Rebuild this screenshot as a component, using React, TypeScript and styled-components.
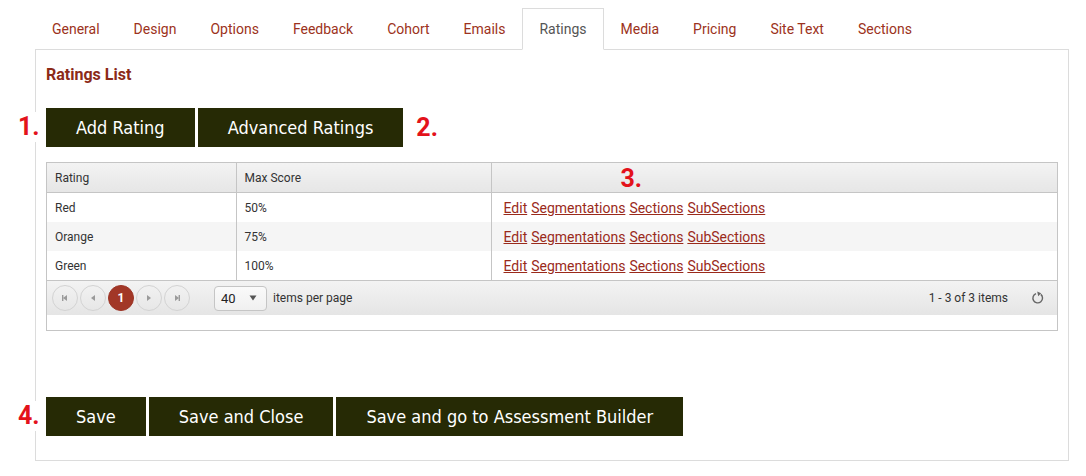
import React from "react";
import styled, { createGlobalStyle } from "styled-components";

const GlobalStyle = createGlobalStyle`
  body {
    margin: 0;
    background: #ffffff;
    font-family: Roboto, "Liberation Sans", sans-serif;
  }
`;

const tabs = ["General", "Design", "Options", "Feedback", "Cohort", "Emails", "Ratings", "Media", "Pricing", "Site Text", "Sections"];

const ratings = [
  { name: "Red", score: "50%" },
  { name: "Orange", score: "75%" },
  { name: "Green", score: "100%" },
];

const Page = styled.div`
  width: 1034px;
  padding: 8px 0 0 35px;
`;

const TabStrip = styled.div`
  display: flex;
  position: relative;
  z-index: 1;
  margin-bottom: -1px;
`;

const Tab = styled.div<{ $active?: boolean }>`
  height: 40px;
  line-height: 40px;
  padding: 0 16px;
  font-size: 14px;
  color: ${(p) => (p.$active ? "#555555" : "#9c3220")};
  border: 1px solid ${(p) => (p.$active ? "#dcdcdc" : "transparent")};
  border-bottom: 1px solid ${(p) => (p.$active ? "#ffffff" : "transparent")};
  background: ${(p) => (p.$active ? "#ffffff" : "transparent")};
  cursor: pointer;
`;

const Panel = styled.div`
  border: 1px solid #dcdcdc;
  padding: 15px 10px 24px 10px;
`;

const Heading = styled.h3`
  margin: 0;
  font-size: 16px;
  line-height: 20px;
  font-weight: 700;
  color: #8c2a18;
`;

const ButtonRow = styled.div<{ $top: number }>`
  display: flex;
  align-items: center;
  gap: 3px;
  position: relative;
  margin-top: ${(p) => p.$top}px;
`;

const ActionButton = styled.button`
  height: 39px;
  padding: 0 30px;
  border: none;
  background: #262a05;
  color: #ffffff;
  font-family: "DejaVu Sans Condensed", "DejaVu Sans", sans-serif;
  font-size: 18px;
  cursor: pointer;
`;

const Marker = styled.span`
  color: #e3121b;
  font-family: Roboto, "Liberation Sans", sans-serif;
  font-weight: 700;
  font-size: 25px;
  line-height: 30px;
`;

const SideMarker = styled(Marker)`
  position: absolute;
  left: -28px;
  top: 4px;
  background: #ffffff;
`;

const FlowMarker = styled(Marker)`
  margin-left: 10px;
`;

const GridBox = styled.div`
  margin-top: 15px;
  border: 1px solid #c5c5c5;
`;

const Table = styled.table`
  width: 100%;
  border-collapse: collapse;
  table-layout: fixed;
  font-size: 12px;
  color: #333333;
`;

const HeadCell = styled.th`
  height: 29px;
  padding: 0 8px;
  text-align: left;
  font-weight: 400;
  line-height: 16px;
  background: linear-gradient(#f3f3f3, #e6e6e6);
  border-bottom: 1px solid #c5c5c5;
  border-left: 1px solid #c5c5c5;
  &:first-child {
    border-left: none;
  }
`;

const HeadMarker = styled(Marker)`
  display: inline-block;
  line-height: 16px;
  margin-left: 121px;
  position: relative;
  top: 3px;
`;

const Row = styled.tr<{ $alt: boolean }>`
  background: ${(p) => (p.$alt ? "#f5f5f5" : "#ffffff")};
`;

const Cell = styled.td`
  height: 29px;
  padding: 0 8px;
  border-left: 1px solid #c5c5c5;
  &:first-child {
    border-left: none;
  }
`;

const LinkCell = styled(Cell)`
  padding-left: 12px;
  font-size: 14px;
`;

const RowLink = styled.a`
  color: #9a2a1b;
  text-decoration: underline;
  margin-right: 4px;
  cursor: pointer;
`;

const Pager = styled.div`
  height: 34px;
  border-top: 1px solid #c5c5c5;
  background: linear-gradient(#f3f3f3, #e5e5e5);
  display: flex;
  align-items: center;
  padding: 0 12px 0 5px;
  font-size: 12px;
  color: #333333;
`;

const PageButtons = styled.div`
  display: flex;
  gap: 2px;
`;

const PageButton = styled.div<{ $active?: boolean }>`
  width: 24px;
  height: 24px;
  border-radius: 50%;
  border: 1px solid ${(p) => (p.$active ? "#9c3426" : "#d3d3d3")};
  background: ${(p) => (p.$active ? "#a23727" : "transparent")};
  color: #ffffff;
  font-size: 12px;
  font-weight: 700;
  display: flex;
  align-items: center;
  justify-content: center;
`;

const SizeSelect = styled.div`
  margin-left: 24px;
  width: 53px;
  height: 25px;
  box-sizing: border-box;
  border: 1px solid #c5c5c5;
  border-radius: 4px;
  background: linear-gradient(#fafafa, #f0f0f0);
  display: flex;
  align-items: center;
  justify-content: space-between;
  padding: 0 9px 0 6px;
  font-size: 13px;
  color: #222222;
`;

const PagerLabel = styled.span`
  margin-left: 6px;
`;

const PagerInfo = styled.span`
  margin-left: auto;
  margin-right: 23px;
`;

const Spacer = styled.div`
  height: 15px;
`;

const Triangle = ({ dir, bar }: { dir: "left" | "right"; bar?: boolean }) => (
  <svg width="10" height="10" viewBox="0 0 10 10">
    {dir === "left" ? (
      <>
        <path d="M7 2 L3 5 L7 8 Z" fill="#9a9a9a" />
        {bar && <rect x="2" y="2" width="1.4" height="6" fill="#9a9a9a" />}
      </>
    ) : (
      <>
        <path d="M3 2 L7 5 L3 8 Z" fill="#9a9a9a" />
        {bar && <rect x="6.6" y="2" width="1.4" height="6" fill="#9a9a9a" />}
      </>
    )}
  </svg>
);

const Refresh = () => (
  <svg width="14" height="14" viewBox="0 0 14 14">
    <path d="M9.8 3.4 A4.8 4.8 0 1 1 5 2.6" fill="none" stroke="#666666" strokeWidth="1.4" />
    <path d="M6.2 0.6 L10.2 2.2 L7.2 5.2 Z" fill="#666666" />
  </svg>
);

const DownArrow = () => (
  <svg width="8" height="6" viewBox="0 0 8 6">
    <path d="M0.5 0.5 L7.5 0.5 L4 5.5 Z" fill="#555555" />
  </svg>
);

export default function App() {
  return (
    <>
      <GlobalStyle />
      <Page>
        <TabStrip>
          {tabs.map((t) => (
            <Tab key={t} $active={t === "Ratings"}>
              {t}
            </Tab>
          ))}
        </TabStrip>
        <Panel>
          <Heading>Ratings List</Heading>
          <ButtonRow $top={23}>
            <SideMarker>1.</SideMarker>
            <ActionButton>Add Rating</ActionButton>
            <ActionButton>Advanced Ratings</ActionButton>
            <FlowMarker>2.</FlowMarker>
          </ButtonRow>
          <GridBox>
            <Table>
              <colgroup>
                <col style={{ width: 189 }} />
                <col style={{ width: 255 }} />
                <col />
              </colgroup>
              <thead>
                <tr>
                  <HeadCell>Rating</HeadCell>
                  <HeadCell>Max Score</HeadCell>
                  <HeadCell>
                    <HeadMarker>3.</HeadMarker>
                  </HeadCell>
                </tr>
              </thead>
              <tbody>
                {ratings.map((r, i) => (
                  <Row key={r.name} $alt={i % 2 === 1}>
                    <Cell>{r.name}</Cell>
                    <Cell>{r.score}</Cell>
                    <LinkCell>
                      <RowLink>Edit</RowLink>
                      <RowLink>Segmentations</RowLink>
                      <RowLink>Sections</RowLink>
                      <RowLink>SubSections</RowLink>
                    </LinkCell>
                  </Row>
                ))}
              </tbody>
            </Table>
            <Pager>
              <PageButtons>
                <PageButton>
                  <Triangle dir="left" bar />
                </PageButton>
                <PageButton>
                  <Triangle dir="left" />
                </PageButton>
                <PageButton $active>1</PageButton>
                <PageButton>
                  <Triangle dir="right" />
                </PageButton>
                <PageButton>
                  <Triangle dir="right" bar />
                </PageButton>
              </PageButtons>
              <SizeSelect>
                40
                <DownArrow />
              </SizeSelect>
              <PagerLabel>items per page</PagerLabel>
              <PagerInfo>1 - 3 of 3 items</PagerInfo>
              <Refresh />
            </Pager>
            <Spacer />
          </GridBox>
          <ButtonRow $top={66}>
            <SideMarker>4.</SideMarker>
            <ActionButton>Save</ActionButton>
            <ActionButton>Save and Close</ActionButton>
            <ActionButton>Save and go to Assessment Builder</ActionButton>
          </ButtonRow>
        </Panel>
      </Page>
    </>
  );
}
